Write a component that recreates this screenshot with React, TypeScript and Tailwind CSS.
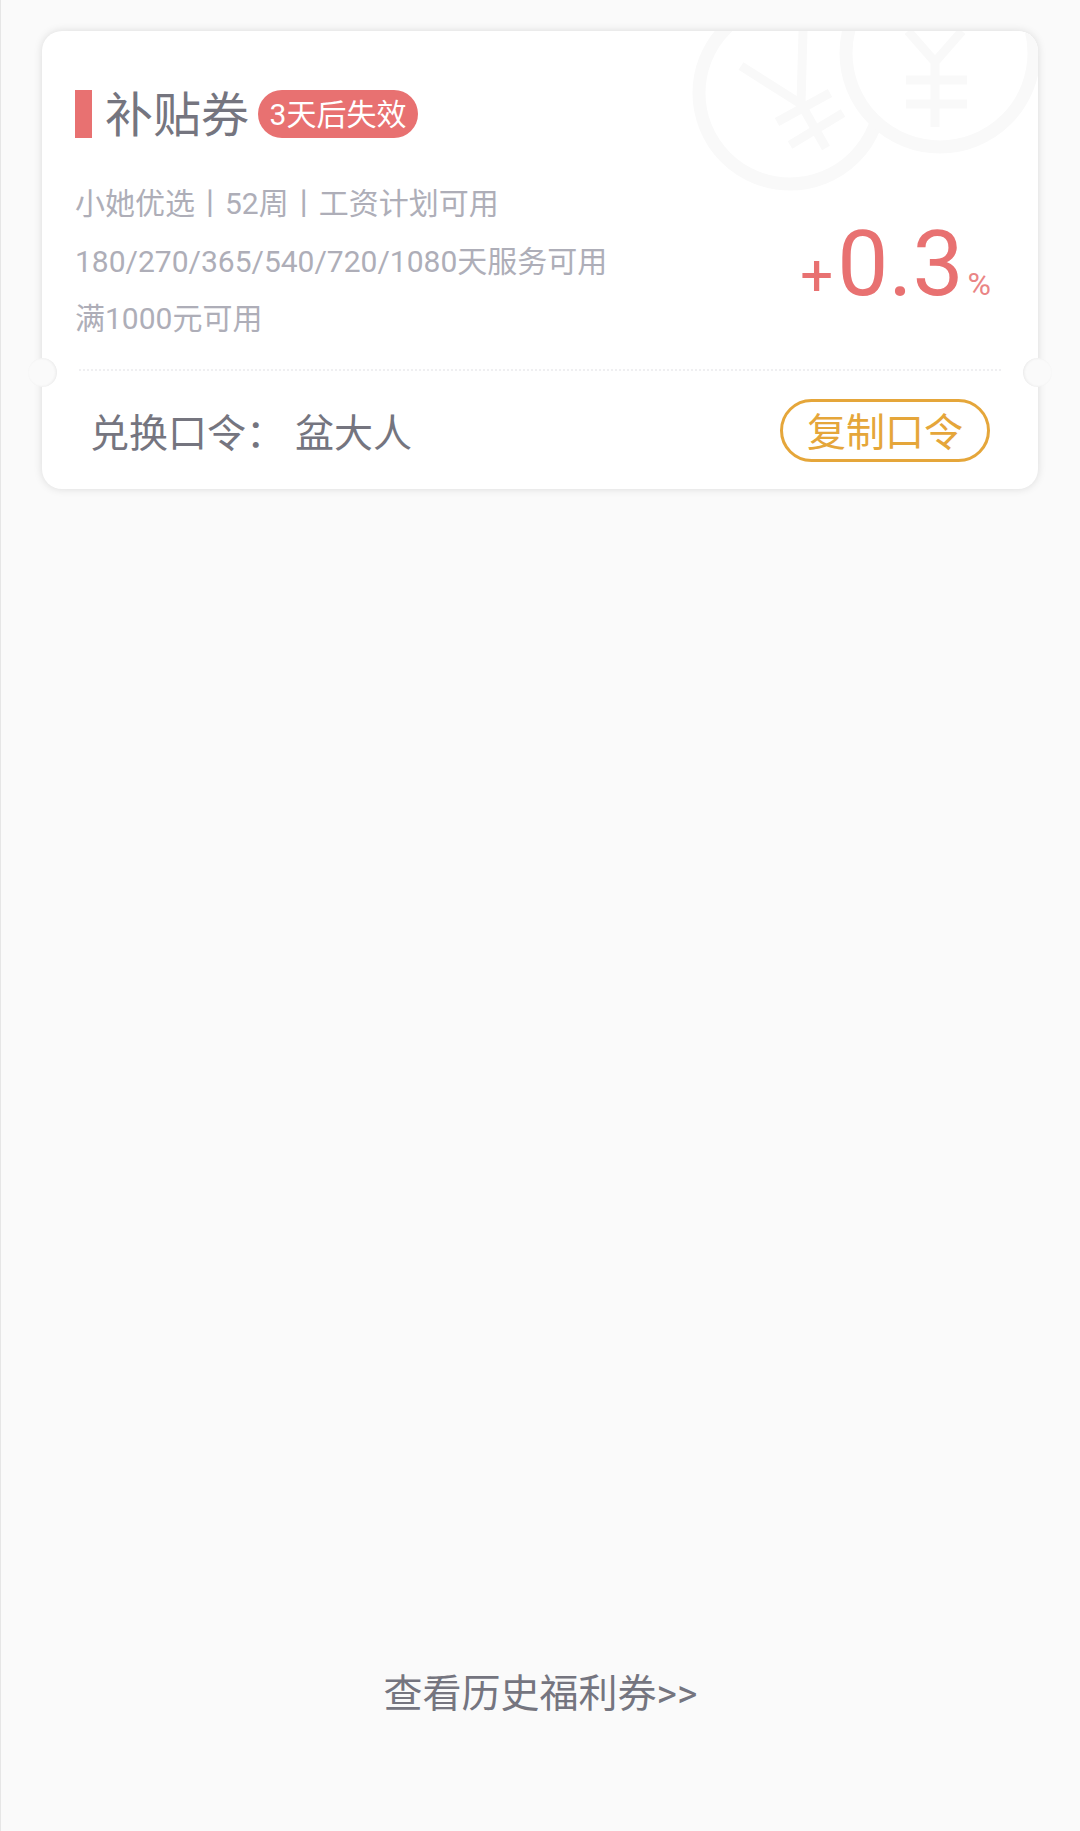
import React from 'react';

const cjk = "font-['Roboto','Noto_Sans_CJK_SC',sans-serif]";

// Faint pair of yen coins in the card's top right corner
const CoinsWatermark: React.FC = () => (
  <svg className="absolute left-[639px] top-0 w-[357px] h-[200px]" viewBox="681 31 357 200" fill="none" stroke="#f9f9f9" strokeWidth="13">
    <circle cx="790" cy="93" r="91" />
    <path strokeWidth="9" d="M741 66 L801 104 L803 31 M801 104 L826 148 M777 122 L830 93 M790 145 L843 113" />
    <circle cx="940" cy="53" r="94" fill="#fff" stroke="none" />
    <circle cx="940" cy="53" r="94" />
    <path strokeWidth="9" d="M908 31 L935 62 L962 31 M935 62 V127 M906 80 H967 M906 104 H967" />
  </svg>
);

const App: React.FC = () => {
  const lines = ['小她优选丨52周丨工资计划可用', '180/270/365/540/720/1080天服务可用', '满1000元可用'];

  return (
    <div className={`${cjk} min-h-[1831px] flex flex-col bg-[#fafafa] border-l border-[#e6e6e6]`}>
      <div className="relative mt-[31px] ml-[41px] w-[996px] h-[458px] bg-white rounded-[20px] shadow-[0_0_8px_rgba(0,0,0,0.13)]">
        <div className="absolute inset-0 rounded-[20px] overflow-hidden">
          <CoinsWatermark />
        </div>

        <div className="relative h-[338px] pt-[59px] pl-[33px] pr-[47px]">
          <div className="flex items-center h-[48px]">
            <div className="w-[17px] h-[48px] bg-[#e87171]" />
            <span className="ml-[13px] pt-[4px] text-[48px] leading-[48px] text-[#75757f]">补贴券</span>
            <span className="ml-[9px] w-[160px] h-[48px] rounded-full bg-[#e87171] text-white text-[30px] leading-[50px] text-center">3天后失效</span>
          </div>
          <div className="flex justify-between items-start mt-[37px]">
            <div className="text-[30px] leading-[57.5px] text-[#aeaeb8]">
              {lines.map((line) => (
                <div key={line} className="whitespace-pre">{line}</div>
              ))}
            </div>
            <div className="flex items-baseline text-[#e87171] mt-[44px] leading-none">
              <span className="text-[58px]">+</span>
              <span className="text-[91px] ml-[4px]">0.3</span>
              <span className="text-[32px] ml-[4px] text-[#ea8585]">%</span>
            </div>
          </div>
        </div>

        <div className="relative mx-[37px] border-t-2 border-dotted border-[#efeff1]" />

        <div className="relative flex items-center justify-between h-[118px] pl-[48px] pr-[48px]">
          <div className="flex text-[39px] text-[#75757f] pt-[9px]">
            <span>兑换口令：</span>
            <span className="ml-[10px]">盆大人</span>
          </div>
          <div className="w-[210px] h-[63px] rounded-full border-[3px] border-[#e5a63a] text-[#e5a63a] text-[39px] leading-[62px] text-center">复制口令</div>
        </div>

        <div className="absolute left-[-14px] top-[327px] w-[29px] h-[29px] rounded-full bg-[#fafafa] shadow-[inset_-1px_0_3px_rgba(0,0,0,0.07)]" />
        <div className="absolute right-[-14px] top-[327px] w-[29px] h-[29px] rounded-full bg-[#fafafa] shadow-[inset_1px_0_3px_rgba(0,0,0,0.07)]" />
      </div>

      <div className="mt-auto pb-[109px] text-center text-[39px] leading-[56px] text-[#75757f]">查看历史福利券&gt;&gt;</div>
    </div>
  );
};

export default App;
